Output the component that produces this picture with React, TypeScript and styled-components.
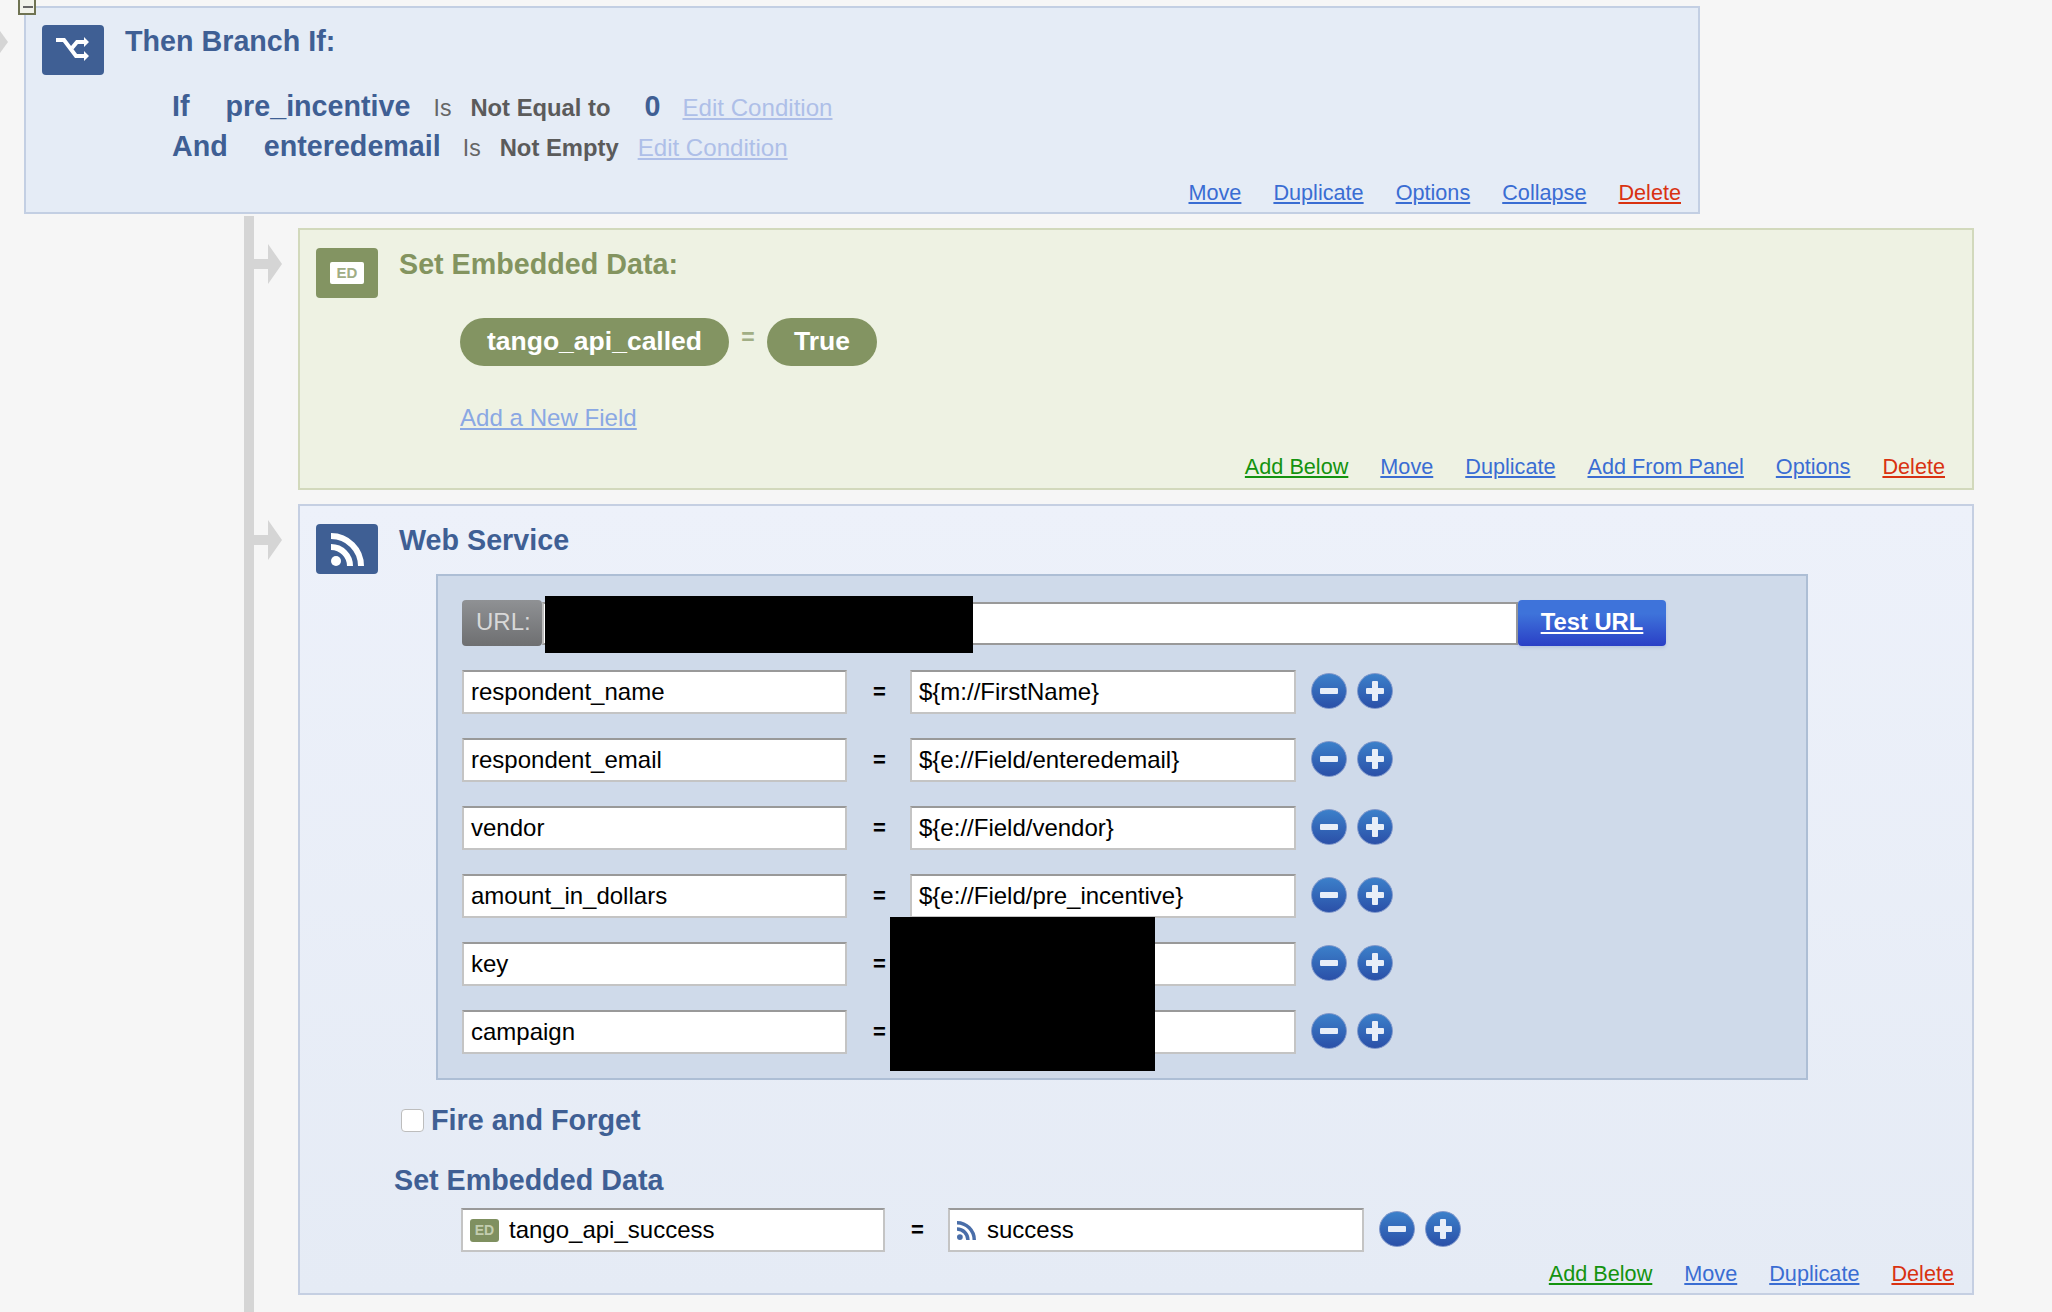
import React from "react";
import styled, { createGlobalStyle } from "styled-components";

const Global = createGlobalStyle`
  html, body { margin: 0; padding: 0; background: #f6f6f6; }
  body { font-family: "Liberation Sans", Arial, sans-serif; }
  * { box-sizing: border-box; }
`;

const Page = styled.div`
  width: 2052px;
  height: 1312px;
  overflow: hidden;
  padding: 6px 0 0 24px;
  display: flex;
  flex-direction: column;
`;

const Block = styled.section<{ $bg: string; $line: string; $h: number; $pt: number; $pb: number }>`
  position: relative;
  width: 1676px;
  height: ${(p) => p.$h}px;
  flex: none;
  background: ${(p) => p.$bg};
  border: 2px solid ${(p) => p.$line};
  padding: ${(p) => p.$pt}px 0 ${(p) => p.$pb}px 16px;
  display: flex;
  flex-direction: column;
`;

const Collapse = styled.div`
  position: absolute;
  left: -8px;
  top: -10px;
  width: 18px;
  height: 17px;
  background: #f1f2ea;
  border: 2px solid #6f7352;
  &::after {
    content: "";
    position: absolute;
    left: 3px;
    top: 6px;
    width: 10px;
    height: 2px;
    background: #666;
  }
`;

const LeftTip = styled.svg`
  position: absolute;
  left: -26px;
  top: 22px;
`;

const Header = styled.div`
  display: flex;
  align-items: flex-start;
  gap: 21px;
  height: 50px;
  flex: none;
`;

const IconTile = styled.div<{ $bg: string }>`
  width: 62px;
  height: 50px;
  flex: none;
  border-radius: 4px;
  background: ${(p) => p.$bg};
  display: flex;
  align-items: center;
  justify-content: center;
`;

const EdBadge = styled.div`
  width: 34px;
  height: 22px;
  background: #fff;
  border-radius: 2px;
  color: #a0ad85;
  font-size: 15px;
  font-weight: 700;
  line-height: 22px;
  text-align: center;
`;

const Title = styled.h2<{ $c: string }>`
  margin: -1px 0 0;
  font-size: 28.7px;
  line-height: 34px;
  font-weight: 700;
  color: ${(p) => p.$c};
`;

const Conditions = styled.div`
  margin: 11px 0 0 130px;
`;

const CondRow = styled.div`
  display: flex;
  align-items: baseline;
  height: 40px;
  line-height: 40px;
  white-space: nowrap;
`;

const Strong = styled.span<{ $ml?: number }>`
  font-size: 28.7px;
  font-weight: 700;
  color: #3f5f94;
  margin-left: ${(p) => p.$ml ?? 0}px;
`;

const Is = styled.span<{ $ml: number }>`
  font-size: 23px;
  color: #666;
  margin-left: ${(p) => p.$ml}px;
`;

const Op = styled.span<{ $ml: number }>`
  font-size: 23.8px;
  font-weight: 700;
  color: #5b5b5b;
  margin-left: ${(p) => p.$ml}px;
`;

const EditLink = styled.a<{ $ml: number }>`
  font-size: 24.1px;
  color: #aebfe8;
  text-decoration: underline;
  margin-left: ${(p) => p.$ml}px;
`;

const Actions = styled.div<{ $pr: number }>`
  margin-top: auto;
  display: flex;
  justify-content: flex-end;
  gap: 32px;
  padding-right: ${(p) => p.$pr}px;
  line-height: 26px;
  font-size: 21.65px;
`;

const Action = styled.a<{ $c?: string }>`
  color: ${(p) => p.$c ?? "#3a6dd3"};
  text-decoration: underline;
`;

const Tree = styled.div`
  flex: 1;
  margin: 2px 0 0 220px;
  border-left: 10px solid #d5d5d5;
  padding: 12px 0 0 44px;
  display: flex;
  flex-direction: column;
  gap: 14px;
`;

const Branch = styled.svg`
  position: absolute;
  left: -46px;
  top: 14px;
`;

const Pills = styled.div`
  display: flex;
  align-items: center;
  margin: 20px 0 0 144px;
  height: 48px;
`;

const Pill = styled.span`
  height: 48px;
  border-radius: 24px;
  background: #839462;
  color: #fff;
  font-size: 26.5px;
  font-weight: 700;
  line-height: 46px;
  padding: 0 27px;
  white-space: nowrap;
`;

const PillEq = styled.span`
  width: 38px;
  text-align: center;
  margin-top: -10px;
  font-size: 23px;
  font-weight: 700;
  color: #a1ae85;
`;

const AddField = styled.a`
  display: block;
  width: max-content;
  margin: 37px 0 0 144px;
  font-size: 24.1px;
  line-height: 30px;
  color: #8aa8e3;
  text-decoration: underline;
`;

const Panel = styled.div`
  position: relative;
  margin-left: 120px;
  width: 1372px;
  height: 506px;
  flex: none;
  background: #cfdaea;
  border: 2px solid #adbed5;
  padding: 24px 0 0 24px;
  display: flex;
  flex-direction: column;
  gap: 24px;
`;

const UrlRow = styled.div`
  display: flex;
  align-items: center;
  height: 46px;
`;

const UrlLabel = styled.div`
  width: 80px;
  height: 46px;
  flex: none;
  border-radius: 4px;
  background: linear-gradient(#8f9194, #6e6f71);
  color: #d8d8d8;
  font-size: 24px;
  line-height: 44px;
  padding-left: 14px;
`;

const UrlInput = styled.div`
  width: 976px;
  height: 43px;
  flex: none;
  background: #fff;
  border: 2px solid #999;
  border-left-color: #bbb;
`;

const TestButton = styled.a`
  width: 148px;
  height: 46px;
  flex: none;
  border-radius: 4px;
  background: linear-gradient(#3e73da 30%, #2a3fc6);
  box-shadow: 0 2px 3px rgba(120, 140, 190, 0.25);
  color: #fff;
  font-size: 23.8px;
  font-weight: 700;
  line-height: 44px;
  text-align: center;
  text-decoration: underline;
`;

const Row = styled.div<{ $ml?: number; $mt?: number }>`
  display: flex;
  align-items: center;
  height: 44px;
  flex: none;
  margin-left: ${(p) => p.$ml ?? 0}px;
  margin-top: ${(p) => p.$mt ?? 0}px;
`;

const Field = styled.div<{ $w: number }>`
  width: ${(p) => p.$w}px;
  height: 44px;
  flex: none;
  display: flex;
  align-items: center;
  background: #fff;
  border: 2px solid #c4c4c4;
  border-top-color: #999;
  padding-left: 7px;
  font-size: 24px;
  color: #000;
  white-space: nowrap;
`;

const Eq = styled.span`
  width: 63px;
  flex: none;
  padding-left: 2px;
  text-align: center;
  font-size: 22px;
  font-weight: 700;
  color: #000;
`;

const Round = styled.button<{ $plus?: boolean }>`
  position: relative;
  width: 36px;
  height: 36px;
  padding: 0;
  flex: none;
  border-radius: 50%;
  border: 1px solid #7f97cb;
  background: linear-gradient(#3c80ca, #2b50a8);
  margin: -2px 0 0 ${(p) => (p.$plus ? 10 : 15)}px;
  &::before {
    content: "";
    position: absolute;
    left: 8px;
    top: 14px;
    width: 18px;
    height: 6px;
    background: #e8eef8;
    border-radius: 1px;
  }
  &::after {
    content: "";
    display: ${(p) => (p.$plus ? "block" : "none")};
    position: absolute;
    left: 14px;
    top: 7px;
    width: 6px;
    height: 20px;
    background: #e8eef8;
    border-radius: 1px;
  }
`;

const Redaction = styled.div<{ $l: number; $t: number; $w: number; $h: number }>`
  position: absolute;
  left: ${(p) => p.$l}px;
  top: ${(p) => p.$t}px;
  width: ${(p) => p.$w}px;
  height: ${(p) => p.$h}px;
  background: #000;
`;

const FireRow = styled.label`
  display: flex;
  align-items: center;
  gap: 7px;
  margin: 23px 0 0 85px;
  height: 34px;
  flex: none;
  font-size: 28.8px;
  font-weight: 700;
  color: #3f5f94;
`;

const Check = styled.input`
  appearance: none;
  margin: 0;
  width: 23px;
  height: 23px;
  background: #fff;
  border: 1px solid #bdbdbd;
  border-radius: 4px;
`;

const SubTitle = styled.h3`
  margin: 26px 0 -1px 78px;
  height: 34px;
  flex: none;
  font-size: 28.7px;
  line-height: 34px;
  font-weight: 700;
  color: #3f5f94;
`;

const MiniEd = styled.span`
  width: 29px;
  height: 23px;
  flex: none;
  margin-right: 10px;
  border-radius: 3px;
  background: #7f9060;
  color: #c3cdaf;
  font-size: 14px;
  font-weight: 700;
  line-height: 23px;
  text-align: center;
`;

const MiniRss = styled.span`
  display: inline-flex;
  flex: none;
  margin-right: 11px;
`;

const Rss = ({ size, color }: { size: number; color: string }) => (
  <svg width={size} height={size} viewBox="0 0 33 33">
    <circle cx="5" cy="28" r="5" fill={color} />
    <path d="M0 14 A19 19 0 0 1 19 33" fill="none" stroke={color} strokeWidth="6" />
    <path d="M0 3 A30 30 0 0 1 30 33" fill="none" stroke={color} strokeWidth="6" />
  </svg>
);

const ArrowBranch = () => (
  <Branch width="28" height="40" viewBox="0 0 28 40">
    <path d="M0 15H14V0L28 20L14 40V25H0Z" fill="#d5d5d5" />
  </Branch>
);

const Links = ({ items, pr }: { items: [string, string?][]; pr: number }) => (
  <Actions $pr={pr}>
    {items.map(([t, c]) => (
      <Action key={t} $c={c} href="#">
        {t}
      </Action>
    ))}
  </Actions>
);

const GREEN = "#14930f";
const RED = "#d93211";

const params: [string, string][] = [
  ["respondent_name", "${m://FirstName}"],
  ["respondent_email", "${e://Field/enteredemail}"],
  ["vendor", "${e://Field/vendor}"],
  ["amount_in_dollars", "${e://Field/pre_incentive}"],
  ["key", ""],
  ["campaign", ""],
];

export default function App() {
  return (
    <Page>
      <Global />
      <Block $bg="#e5ecf6" $line="#c3cfe3" $h={208} $pt={17} $pb={6}>
        <Collapse />
        <LeftTip width="8" height="24" viewBox="0 0 8 24">
          <path d="M0 1L8 12L0 23Z" fill="#d5d5d5" />
        </LeftTip>
        <Header>
          <IconTile $bg="#3f5f94">
            <svg width="62" height="50" viewBox="0 0 62 50">
              <g fill="none" stroke="#fff" strokeWidth="4">
                <path d="M14 15H22L34 31H43" />
                <path d="M30 23L35 17H43" />
              </g>
              <path d="M42 26L47 31L42 36Z M42 12L47 17L42 22Z" fill="#fff" />
            </svg>
          </IconTile>
          <Title $c="#3f5f94">Then Branch If:</Title>
        </Header>
        <Conditions>
          <CondRow>
            <Strong>If</Strong>
            <Strong $ml={36}>pre_incentive</Strong>
            <Is $ml={23}>Is</Is>
            <Op $ml={19}>Not Equal to</Op>
            <Strong $ml={34}>0</Strong>
            <EditLink $ml={22} href="#">Edit Condition</EditLink>
          </CondRow>
          <CondRow>
            <Strong>And</Strong>
            <Strong $ml={36}>enteredemail</Strong>
            <Is $ml={22}>Is</Is>
            <Op $ml={19}>Not Empty</Op>
            <EditLink $ml={19} href="#">Edit Condition</EditLink>
          </CondRow>
        </Conditions>
        <Links pr={17} items={[["Move"], ["Duplicate"], ["Options"], ["Collapse"], ["Delete", RED]]} />
      </Block>

      <Tree>
        <Block $bg="#eef2e3" $line="#d2d9bc" $h={262} $pt={18} $pb={8}>
          <ArrowBranch />
          <Header>
            <IconTile $bg="#839462">
              <EdBadge>ED</EdBadge>
            </IconTile>
            <Title $c="#83945f">Set Embedded Data:</Title>
          </Header>
          <Pills>
            <Pill>tango_api_called</Pill>
            <PillEq>=</PillEq>
            <Pill>True</Pill>
          </Pills>
          <AddField href="#">Add a New Field</AddField>
          <Links
            pr={27}
            items={[["Add Below", GREEN], ["Move"], ["Duplicate"], ["Add From Panel"], ["Options"], ["Delete", RED]]}
          />
        </Block>

        <Block $bg="linear-gradient(#edf1fa, #e5ebf5)" $line="#c5cfe2" $h={791} $pt={18} $pb={6}>
          <ArrowBranch />
          <Header>
            <IconTile $bg="#3f5f94">
              <Rss size={33} color="#fff" />
            </IconTile>
            <Title $c="#3f5f94">Web Service</Title>
          </Header>
          <Panel>
            <UrlRow>
              <UrlLabel>URL:</UrlLabel>
              <UrlInput />
              <TestButton href="#">Test URL</TestButton>
            </UrlRow>
            {params.map(([k, v]) => (
              <Row key={k}>
                <Field $w={385}>{k}</Field>
                <Eq>=</Eq>
                <Field $w={386}>{v}</Field>
                <Round aria-label="Remove" />
                <Round aria-label="Add" $plus />
              </Row>
            ))}
            <Redaction $l={107} $t={20} $w={428} $h={57} />
            <Redaction $l={452} $t={341} $w={265} $h={154} />
          </Panel>
          <FireRow>
            <Check type="checkbox" />
            Fire and Forget
          </FireRow>
          <SubTitle>Set Embedded Data</SubTitle>
          <Row $ml={145} $mt={12}>
            <Field $w={424}>
              <MiniEd>ED</MiniEd>
              tango_api_success
            </Field>
            <Eq>=</Eq>
            <Field $w={416}>
              <MiniRss>
                <Rss size={19} color="#4a6ea9" />
              </MiniRss>
              success
            </Field>
            <Round aria-label="Remove" />
            <Round aria-label="Add" $plus />
          </Row>
          <Links pr={18} items={[["Add Below", GREEN], ["Move"], ["Duplicate"], ["Delete", RED]]} />
        </Block>
      </Tree>
    </Page>
  );
}
